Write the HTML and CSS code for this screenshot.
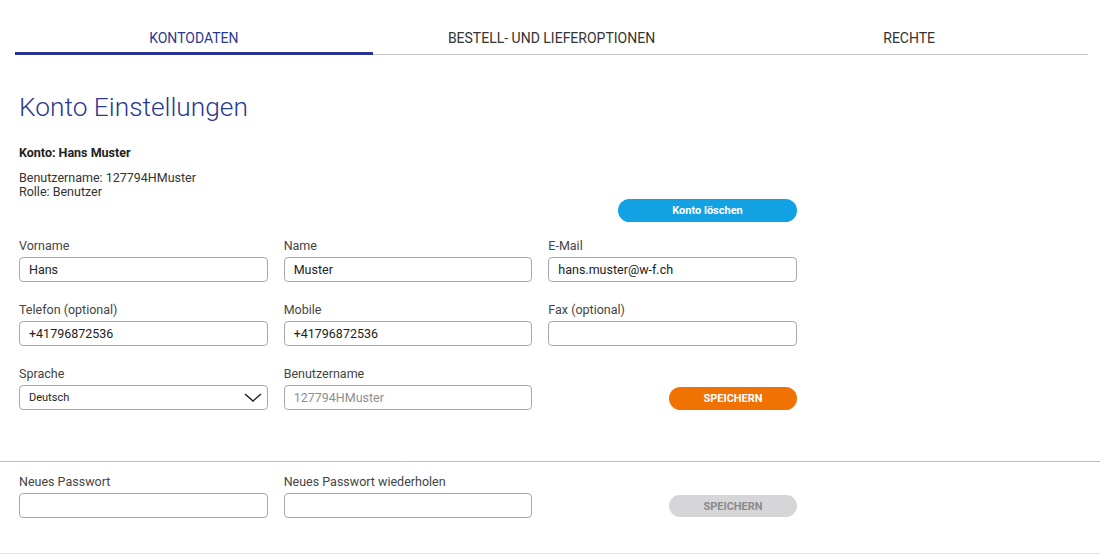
FILE: index.html
```html
<!DOCTYPE html>
<html lang="de">
<head>
    <meta charset="UTF-8">
    <meta name="viewport" content="width=device-width, initial-scale=1.0">
    <title>Konto Einstellungen</title>
    <link rel="stylesheet" href="styles.css">
</head>
<body>
    <nav class="tabs">
        <a class="tab active" href="#">Kontodaten</a>
        <a class="tab" href="#">Bestell- und Lieferoptionen</a>
        <a class="tab" href="#">Rechte</a>
    </nav>

    <main class="content">
        <h1>Konto Einstellungen</h1>

        <p class="account-name">Konto: Hans Muster</p>
        <p class="account-info">Benutzername: 127794HMuster<br>Rolle: Benutzer</p>

        <div class="delete-row">
            <button class="btn btn-blue">Konto löschen</button>
        </div>

        <form class="form-grid">
            <div class="field">
                <label>Vorname</label>
                <input type="text" value="Hans">
            </div>
            <div class="field">
                <label>Name</label>
                <input type="text" value="Muster">
            </div>
            <div class="field">
                <label>E-Mail</label>
                <input type="text" value="hans.muster@w-f.ch">
            </div>

            <div class="field">
                <label>Telefon (optional)</label>
                <input type="text" value="+41796872536">
            </div>
            <div class="field">
                <label>Mobile</label>
                <input type="text" value="+41796872536">
            </div>
            <div class="field">
                <label>Fax (optional)</label>
                <input type="text" value="">
            </div>

            <div class="field">
                <label>Sprache</label>
                <div class="select-wrap">
                    <select>
                        <option>Deutsch</option>
                        <option>Français</option>
                        <option>Italiano</option>
                    </select>
                    <svg class="chevron" width="18" height="9" viewBox="0 0 18 9">
                        <path d="M1 1 L9 8 L17 1" fill="none" stroke="#222" stroke-width="1.5"/>
                    </svg>
                </div>
            </div>
            <div class="field">
                <label>Benutzername</label>
                <input type="text" value="127794HMuster" disabled>
            </div>
            <div class="field field-action">
                <button type="button" class="btn btn-orange">Speichern</button>
            </div>
        </form>
    </main>

    <hr class="divider">

    <section class="content password">
        <div class="form-grid">
            <div class="field">
                <label>Neues Passwort</label>
                <input type="password">
            </div>
            <div class="field">
                <label>Neues Passwort wiederholen</label>
                <input type="password">
            </div>
            <div class="field field-action">
                <button type="button" class="btn btn-grey" disabled>Speichern</button>
            </div>
        </div>
    </section>

    <hr class="divider light">
</body>
</html>
```

FILE: styles.css
```css
body {
    font-family: Roboto, Arial, sans-serif;
    margin: 0;
    padding: 0;
    color: #333;
    background: #fff;
}

.tabs {
    display: flex;
    margin: 22px 12px 0 15px;
}

.tab {
    flex: 1;
    text-align: center;
    text-decoration: none;
    text-transform: uppercase;
    font-size: 14px;
    line-height: 16px;
    color: #333;
    padding: 8px 0 8px;
    border-bottom: 1px solid #c8c8c8;
}

.tab.active {
    color: #2b3990;
    padding-bottom: 6px;
    border-bottom: 3px solid #26338f;
}

.content {
    padding-left: 19px;
    width: 778px;
}

h1 {
    font-weight: 300;
    font-size: 26.3px;
    line-height: 30px;
    color: #2b3990;
    margin: 37px 0 0;
}

.account-name {
    font-size: 12.5px;
    font-weight: bold;
    line-height: 14px;
    color: #222;
    margin: 24px 0 0;
}

.account-info {
    font-size: 12.5px;
    line-height: 14px;
    color: #333;
    margin: 11px 0 0;
}

.delete-row {
    display: flex;
    justify-content: flex-end;
    margin-top: 0;
}

.btn {
    font-family: Roboto, Arial, sans-serif;
    font-size: 11px;
    font-weight: bold;
    border: none;
    border-radius: 12px;
    height: 23px;
    cursor: pointer;
}

.btn-blue {
    width: 179px;
    background-color: #12a1e3;
    color: #fff;
}

.btn-orange {
    width: 128px;
    background-color: #ef7203;
    color: #fff;
    text-transform: uppercase;
}

.btn-grey {
    width: 128px;
    height: 22px;
    background-color: #d6d6d8;
    color: #8a8a8e;
    text-transform: uppercase;
    cursor: default;
}

.form-grid {
    display: grid;
    grid-template-columns: repeat(3, 1fr);
    column-gap: 16px;
    row-gap: 20px;
    margin-top: 16px;
}

.field {
    display: flex;
    flex-direction: column;
}

.field label {
    font-size: 12.5px;
    line-height: 16px;
    color: #444;
    margin-bottom: 3px;
}

.field input,
.field select {
    box-sizing: border-box;
    height: 25px;
    width: 100%;
    border: 1px solid #a9a9a9;
    border-radius: 4px;
    padding: 0 9px;
    font-family: Roboto, Arial, sans-serif;
    font-size: 12.5px;
    color: #222;
    background: #fff;
}

.field input:disabled {
    color: #8e8e8e;
}

.field-action {
    align-items: flex-end;
    justify-content: flex-end;
}

.select-wrap {
    position: relative;
}

.field select {
    appearance: none;
    font-size: 11px;
    padding-left: 9px;
}

.chevron {
    position: absolute;
    right: 6px;
    top: 8px;
    pointer-events: none;
}

.divider {
    border: none;
    border-top: 1px solid #bdbdbd;
    margin: 51px 0 0;
}

.divider.light {
    border-top-color: #e2e2e2;
    margin-top: 35px;
}

.password .form-grid {
    margin-top: 12px;
}

.password .btn-grey {
    margin-bottom: 1px;
}
```
